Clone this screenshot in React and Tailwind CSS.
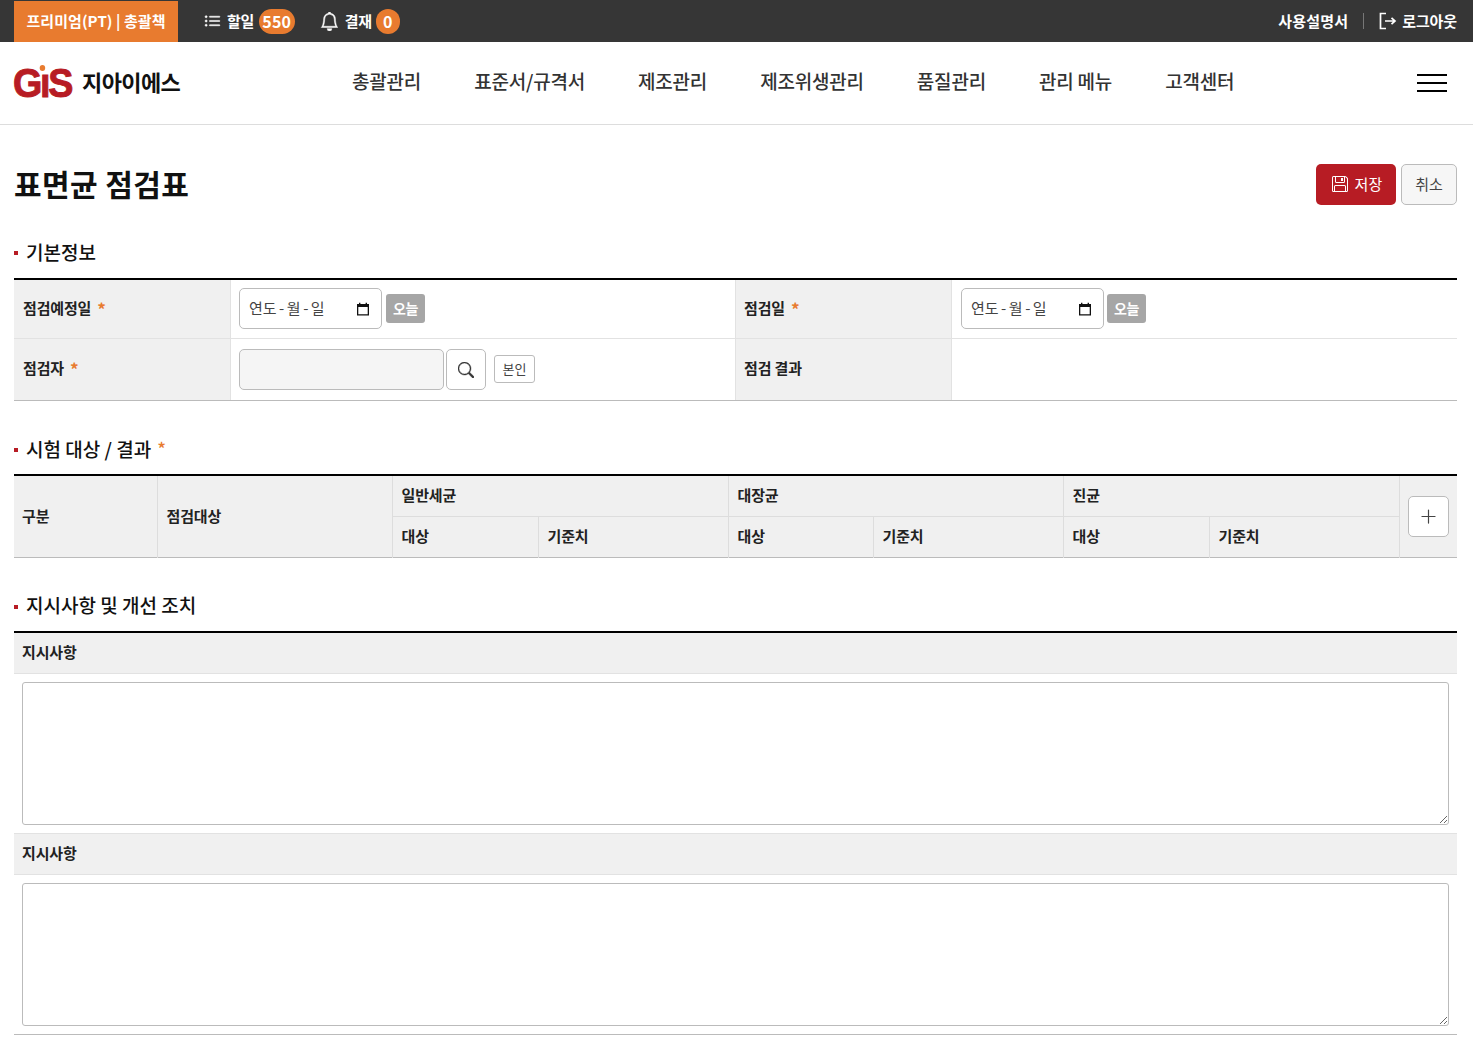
import { BsBell, BsFloppy, BsListUl, BsPlusLg, BsSearch } from "react-icons/bs";

const menus = ["총괄관리", "표준서/규격서", "제조관리", "제조위생관리", "품질관리", "관리 메뉴", "고객센터"];

function Req() {
  return <span className="ml-1.5 text-[17px] font-bold leading-none text-[#e87b2f]">*</span>;
}

function SectionTitle({ children, req }) {
  return (
    <h2 className="flex h-[30px] items-center pb-[2px] text-[19px] font-medium leading-none tracking-[0px] text-[#111]">
      <span className="mr-2 mt-1 h-[4px] w-[4px] bg-[#b71c24]" />
      {children}
      {req && <span className="ml-1.5 text-[18px] text-[#e87b2f]">*</span>}
    </h2>
  );
}

function CalendarIcon() {
  return (
    <svg width="14" height="14" viewBox="0 0 14 14" className="text-[#111]">
      <path d="M1 2h2V0.8h1.4V2h5.2V0.8H11V2h2v11.5H1z M2.3 5v7.2h9.4V5z" fill="currentColor" fillRule="evenodd" />
    </svg>
  );
}

function DateField({ className = "gap-[3px]" }) {
  return (
    <div className={`flex items-center ${className}`}>
      <div className="flex h-[41px] w-[143px] items-center justify-between rounded-[5px] border border-[#bbb] bg-white pl-[9px] pr-[11px] text-[15px] text-[#444]">
        <span className="pb-px">
          연도<span className="mx-[2.5px]">-</span>월<span className="mx-[2.5px]">-</span>일
        </span>
        <CalendarIcon />
      </div>
      <button className="h-[29px] w-[39px] rounded-[3px] bg-[#a6a6a6] text-[14px] font-bold tracking-[-0.3px] text-white">오늘</button>
    </div>
  );
}

function Th({ children, className = "" }) {
  return (
    <div className={`flex items-center bg-[#f0f0f0] pb-[2px] pr-2 text-[15px] font-bold tracking-[-0.15px] text-[#222] ${className}`}>
      {children}
    </div>
  );
}

function TestCell({ children, className = "", ...rest }) {
  return (
    <th {...rest} className={`border-l border-[#ddd] bg-[#f0f0f0] pb-px pl-[9px] text-left text-[15px] font-bold tracking-[-0.15px] text-[#222] first:border-l-0 first:pl-2 ${className}`}>
      {children}
    </th>
  );
}

function Note({ title, className = "h-[41px]" }) {
  return (
    <>
      <div className={`flex items-center border-b border-[#e2e2e2] bg-[#f0f0f0] pb-px pl-2 text-[15px] font-bold tracking-[-0.15px] text-[#222] ${className}`}>
        {title}
      </div>
      <div className="p-2">
        <textarea className="block h-[143px] w-full resize rounded-[3px] border border-[#bbb] bg-white" />
      </div>
    </>
  );
}

export default function App() {
  return (
    <div className="min-h-[1057px] bg-white font-['Noto_Sans_CJK_KR','Noto_Sans',sans-serif] text-[#222]">
      <div className="flex h-[42px] items-stretch justify-between bg-[#363636] pl-3.5 pr-4 text-white">
        <div className="flex items-stretch">
          <div className="mt-px flex w-[164px] items-center justify-center bg-[#e87b2f] text-[15px] font-bold tracking-[0.05px]">
            프리미엄(PT) | 총괄책
          </div>
          <div className="ml-[26px] flex items-center text-[15px] font-bold tracking-[-0.4px]">
            <BsListUl className="mr-[6px] stroke-[0.5] text-[17px]" />
            할일
            <span className="ml-[5px] flex h-[25px] w-9 items-center justify-center rounded-full bg-[#e87b2f] text-[16px] font-bold tracking-[0.2px]">550</span>
          </div>
          <div className="ml-[25px] flex items-center text-[15px] font-bold tracking-[-0.4px]">
            <BsBell className="mr-[6px] stroke-[0.4] text-[19px]" />
            결재
            <span className="ml-1 flex h-[25px] w-6 items-center justify-center rounded-full bg-[#e87b2f] text-[16px] font-bold">0</span>
          </div>
        </div>
        <div className="flex items-center text-[15px] font-bold tracking-[-0.1px]">
          <span className="tracking-[0.2px]">사용설명서</span>
          <span className="mx-[15px] h-4 w-px bg-[#777]" />
          <svg width="18" height="18" viewBox="0 0 18 18" fill="none" stroke="currentColor" strokeWidth="1.7" className="mr-[5px]">
            <path d="M7 1.5H1.5v15H7" />
            <path d="M6 9h10M12.5 5.8 16 9l-3.5 3.2" />
          </svg>
          로그아웃
        </div>
      </div>

      <header className="flex h-[83px] items-center border-b border-[#ddd] pl-3.5 pr-[26px]">
        <div className="flex w-[338px] items-center pb-[3px]">
          <span className="-ml-px mt-1 flex w-[60px] font-['Liberation_Sans',sans-serif] text-[41px] font-bold leading-none text-[#b71c24] [-webkit-text-stroke:1px_#b71c24]">
            <span className="relative origin-left scale-x-[0.92] whitespace-nowrap tracking-[-2.5px]">
              G<span>ı</span>S
              <span className="absolute left-[29px] top-[2px] h-[6px] w-[6px] rounded-full bg-[#e87b2f]" />
            </span>
          </span>
          <span className="ml-[9px] text-[22px] font-bold tracking-[-0.6px] text-[#111]">지아이에스</span>
        </div>
        <nav className="mb-[3px] flex flex-1 gap-[53px] text-[19px] font-medium tracking-[-0.2px] text-[#333]">
          {menus.map((m) => (
            <span key={m}>{m}</span>
          ))}
        </nav>
        <div className="flex w-[30px] flex-col gap-[6px]">
          <span className="h-[2px] bg-black" />
          <span className="h-[2px] bg-black" />
          <span className="h-[2px] bg-black" />
        </div>
      </header>

      <main className="pl-[14px] pr-4">
        <div className="flex h-[80px] items-center justify-between pt-[39px]">
          <h1 className="pb-[2px] text-[30px] font-bold tracking-[0.4px] text-[#111]">표면균 점검표</h1>
          <div className="flex gap-[5px]">
            <button className="flex h-[41px] w-20 items-center justify-center gap-[6px] rounded-[5px] bg-[#b71c24] pb-px pl-[3px] text-[15px] tracking-[0.2px] text-white">
              <BsFloppy className="text-[16px]" />
              저장
            </button>
            <button className="h-[41px] w-14 rounded-[5px] border border-[#bbb] bg-[#f6f6f6] pb-px text-[15px] text-[#444]">취소</button>
          </div>
        </div>

        <div className="mt-[32px]">
          <SectionTitle>기본정보</SectionTitle>
        </div>
        <div className="mt-[11px] grid grid-cols-[216px_505px_216px_1fr] border-y border-b-[#bbb] border-t-black [border-top-width:2px]">
          <Th className="h-[59px] border-b border-[#e2e2e2] pl-[9px]">
            점검예정일
            <Req />
          </Th>
          <div className="flex items-center border-b border-l border-[#e2e2e2] pb-px pl-2">
            <DateField className="gap-1" />
          </div>
          <Th className="border-b border-l border-[#e2e2e2] pl-2">
            점검일
            <Req />
          </Th>
          <div className="flex items-center border-b border-l border-[#e2e2e2] pb-px pl-[9px]">
            <DateField />
          </div>
          <Th className="h-[61px] pl-[9px]">
            점검자
            <Req />
          </Th>
          <div className="flex items-center border-l border-[#e2e2e2] pl-2">
            <div className="h-[41px] w-[205px] rounded-[5px] border border-[#bbb] bg-[#f5f5f5]" />
            <button className="ml-[2px] flex h-[41px] w-10 items-center justify-center rounded-[5px] border border-[#bbb] bg-white text-[#333]">
              <BsSearch className="stroke-[0.4] text-[16px]" />
            </button>
            <button className="mb-px ml-2 h-[28px] w-[41px] rounded-[3px] border border-[#bbb] bg-white pb-px text-[13px] text-[#444]">본인</button>
          </div>
          <Th className="border-l border-[#e2e2e2] pl-2">점검 결과</Th>
          <div className="border-l border-[#e2e2e2]" />
        </div>

        <div className="mt-[33px]">
          <SectionTitle req>시험 대상 / 결과</SectionTitle>
        </div>
        <table className="mt-[10px] w-full table-fixed border-collapse border-y border-b-[#bbb] border-t-black [border-top-width:2px]">
          <colgroup>
            <col className="w-[143px]" />
            <col className="w-[235px]" />
            <col className="w-[146px]" />
            <col className="w-[190px]" />
            <col className="w-[145px]" />
            <col className="w-[190px]" />
            <col className="w-[146px]" />
            <col className="w-[190px]" />
            <col />
          </colgroup>
          <thead>
            <tr className="h-[41px]">
              <TestCell rowSpan={2}>구분</TestCell>
              <TestCell rowSpan={2}>점검대상</TestCell>
              <TestCell colSpan={2}>일반세균</TestCell>
              <TestCell colSpan={2}>대장균</TestCell>
              <TestCell colSpan={2}>진균</TestCell>
              <th rowSpan={2} className="border-l border-[#ddd] bg-[#f0f0f0]">
                <button className="mx-auto flex h-[41px] w-[41px] items-center justify-center rounded-[5px] border border-[#bbb] bg-white text-[19px] font-normal text-[#444]">
                  <BsPlusLg />
                </button>
              </th>
            </tr>
            <tr className="h-[41px] border-t border-[#ddd]">
              <TestCell className="!border-l !pl-[9px]">대상</TestCell>
              <TestCell>기준치</TestCell>
              <TestCell>대상</TestCell>
              <TestCell>기준치</TestCell>
              <TestCell>대상</TestCell>
              <TestCell>기준치</TestCell>
            </tr>
          </thead>
        </table>

        <div className="mt-[33px]">
          <SectionTitle>지시사항 및 개선 조치</SectionTitle>
        </div>
        <div className="mt-[10px] border-b border-b-[#bbb] border-t-2 border-t-black">
          <Note title="지시사항" />
          <Note title="지시사항" className="h-[42px] border-t" />
        </div>
      </main>
    </div>
  );
}
